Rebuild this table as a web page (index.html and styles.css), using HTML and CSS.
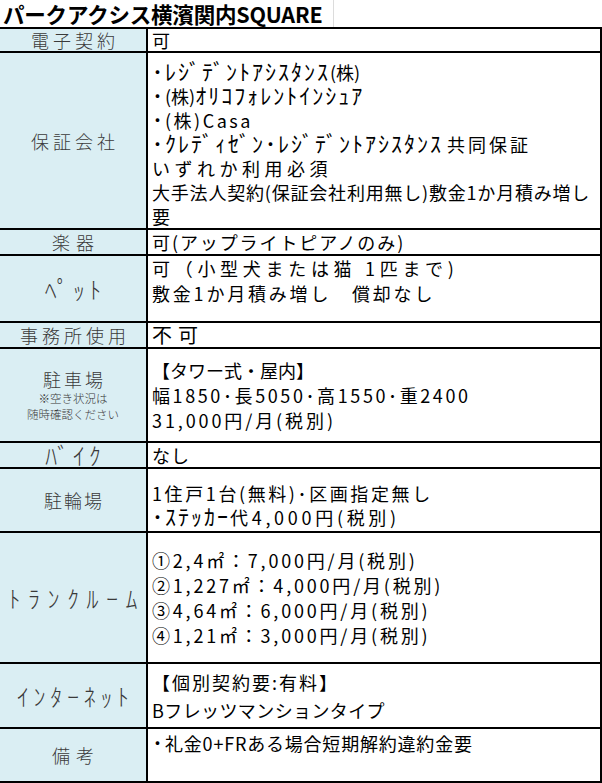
FILE: index.html
```html
<!DOCTYPE html>
<html lang="ja">
<head>
<meta charset="utf-8">
<title>パークアクシス横濱関内SQUARE</title>
<link rel="stylesheet" href="styles.css">
</head>
<body>
<div class="sheet">
  <div class="title-row">
    <div class="title">パークアクシス横濱関内SQUARE</div>
  </div>
  <div class="table">
    <div class="row h-24">
      <div class="label"><span class="ls4">電子契約</span></div>
      <div class="value v-short"><div>可</div></div>
    </div>
    <div class="row h-177">
      <div class="label"><span class="ls4">保証会社</span></div>
      <div class="value v-guar">
        <div><span class="hw">･ﾚｼﾞﾃﾞﾝﾄｱｼｽﾀﾝｽ</span>(株)</div>
        <div><span class="hw">･</span>(株)<span class="hw">ｵﾘｺﾌｫﾚﾝﾄｲﾝｼｭｱ</span></div>
        <div class="k25"><span class="hw">･</span>(株)Casa</div>
        <div><span class="hw">･ｸﾚﾃﾞｨｾﾞﾝ･ﾚｼﾞﾃﾞﾝﾄｱｼｽﾀﾝｽ</span> <span class="k3">共同保証</span></div>
        <div class="k45">いずれか利用必須</div>
        <div class="k08">大手法人契約(保証会社利用無し)敷金1か月積み増し</div>
        <div>要</div>
      </div>
    </div>
    <div class="row h-26">
      <div class="label"><span class="ls6">楽器</span></div>
      <div class="value"><div class="k19">可(アップライトピアノのみ)</div></div>
    </div>
    <div class="row h-67">
      <div class="label"><span class="hw hl43">ﾍﾟｯﾄ</span></div>
      <div class="value v-top">
        <div class="k47">可（小型犬または猫 1匹まで)</div>
        <div class="k28">敷金1か月積み増し　償却なし</div>
      </div>
    </div>
    <div class="row h-26">
      <div class="label"><span class="ls4">事務所使用</span></div>
      <div class="value"><div class="big k6">不可</div></div>
    </div>
    <div class="row h-94">
      <div class="label">
        <span class="ls3">駐車場</span>
        <span class="note">※空き状況は</span>
        <span class="note">随時確認ください</span>
      </div>
      <div class="value">
        <div>【タワー式・屋内】</div>
        <div class="k26">幅1850･長5050･高1550･重2400</div>
        <div class="k29">31,000円/月(税別)</div>
      </div>
    </div>
    <div class="row h-26">
      <div class="label"><span class="hw hl37">ﾊﾞｲｸ</span></div>
      <div class="value"><div class="k1">なし</div></div>
    </div>
    <div class="row h-64">
      <div class="label"><span class="ls2">駐輪場</span></div>
      <div class="value v-bottom">
        <div class="k26">1住戸1台(無料)･区画指定無し</div>
        <div class="k37"><span class="hw">･ｽﾃｯｶｰ</span>代4,000円(税別)</div>
      </div>
    </div>
    <div class="row h-131">
      <div class="label"><span class="hw hl75">ﾄﾗﾝｸﾙｰﾑ</span></div>
      <div class="value">
        <div class="k28">①2,4㎡：7,000円/月(税別)</div>
        <div class="k28">②1,227㎡：4,000円/月(税別)</div>
        <div class="k28">③4,64㎡：6,000円/月(税別)</div>
        <div class="k28">④1,21㎡：3,000円/月(税別)</div>
      </div>
    </div>
    <div class="row h-65">
      <div class="label"><span class="hw hl47">ｲﾝﾀｰﾈｯﾄ</span></div>
      <div class="value v-net">
        <div class="k2">【個別契約要:有料】</div>
        <div class="k04">Bフレッツマンションタイプ</div>
      </div>
    </div>
    <div class="row h-54">
      <div class="label"><span class="ls6">備考</span></div>
      <div class="value v-note"><div class="k08"><span class="hw">･</span>礼金0+FRある場合短期解約違約金要</div></div>
    </div>
  </div>
</div>
</body>
</html>
```

FILE: styles.css
```css
* { box-sizing: border-box; }

html, body {
  margin: 0;
  padding: 0;
  background: #fff;
}

body {
  font-family: "Noto Sans CJK JP", "Noto Sans", sans-serif;
  color: #000;
}

.sheet {
  width: 602px;
}

.title-row {
  height: 27px;
  display: flex;
  align-items: center;
}

.title {
  width: 334px;
  height: 27px;
  padding-left: 3px;
  border-right: 1px solid #dcdcdc;
  font-size: 21.5px;
  font-weight: 700;
  line-height: 27px;
  white-space: nowrap;
  letter-spacing: -0.2px;
}

.table {
  border-top: 2px solid #000;
  border-right: 2px solid #000;
}

.row {
  display: flex;
  border-bottom: 2px solid #000;
}

.h-24 { height: 24px; }
.h-26 { height: 26px; }
.h-54 { height: 54px; }
.h-64 { height: 64px; }
.h-65 { height: 65px; }
.h-67 { height: 67px; }
.h-94 { height: 94px; }
.h-131 { height: 131px; }
.h-177 { height: 177px; }

.label {
  width: 148px;
  flex: none;
  border-right: 2px solid #000;
  background: #daeef3;
  color: #3a3a3a;
  font-size: 18px;
  font-weight: 300;
  line-height: 22px;
  display: flex;
  flex-direction: column;
  align-items: center;
  justify-content: center;
  white-space: nowrap;
}

.label .note {
  font-size: 11.5px;
  line-height: 16px;
  letter-spacing: 0;
}

.ls2 { letter-spacing: 2px; padding-left: 2px; }
.ls3 { letter-spacing: 3px; padding-left: 3px; }
.ls4 { letter-spacing: 4px; padding-left: 4px; }
.ls6 { letter-spacing: 6px; padding-left: 6px; }

.hw {
  font-size: 22px;
  line-height: 20px;
  letter-spacing: 2px;
}

.label .hw {
  font-size: 24px;
  line-height: 22px;
}

.hl37 { letter-spacing: 3.7px; padding-left: 3.7px; }
.hl43 { letter-spacing: 4.3px; padding-left: 4.3px; }
.hl47 { letter-spacing: 4.7px; padding-left: 4.7px; }
.hl75 { letter-spacing: 7.5px; padding-left: 7.5px; }

.value {
  flex: 1;
  min-width: 0;
  padding-left: 4px;
  font-size: 18px;
  line-height: 25px;
  display: flex;
  flex-direction: column;
  justify-content: center;
  white-space: nowrap;
}

.v-short {
  line-height: 22px;
}

.v-guar {
  justify-content: flex-start;
  padding-top: 6.5px;
  line-height: 24px;
}

.v-top {
  justify-content: flex-start;
}

.v-bottom {
  justify-content: flex-end;
  padding-bottom: 2px;
  line-height: 23px;
}

.v-net {
  line-height: 28px;
}

.v-note {
  justify-content: flex-start;
  padding-top: 2px;
}

.big {
  font-size: 20px;
  line-height: 24px;
}

.k04 { letter-spacing: 0.4px; }
.k08 { letter-spacing: 0.8px; }
.k1 { letter-spacing: 1px; }
.k19 { letter-spacing: 1.9px; }
.k2 { letter-spacing: 2px; }
.k25 { letter-spacing: 2.5px; }
.k26 { letter-spacing: 2.6px; }
.k28 { letter-spacing: 2.8px; }
.k29 { letter-spacing: 2.9px; }
.k3 { letter-spacing: 3px; }
.k37 { letter-spacing: 3.7px; }
.k45 { letter-spacing: 4.5px; }
.k47 { letter-spacing: 4.7px; }
.k6 { letter-spacing: 6px; }
```
